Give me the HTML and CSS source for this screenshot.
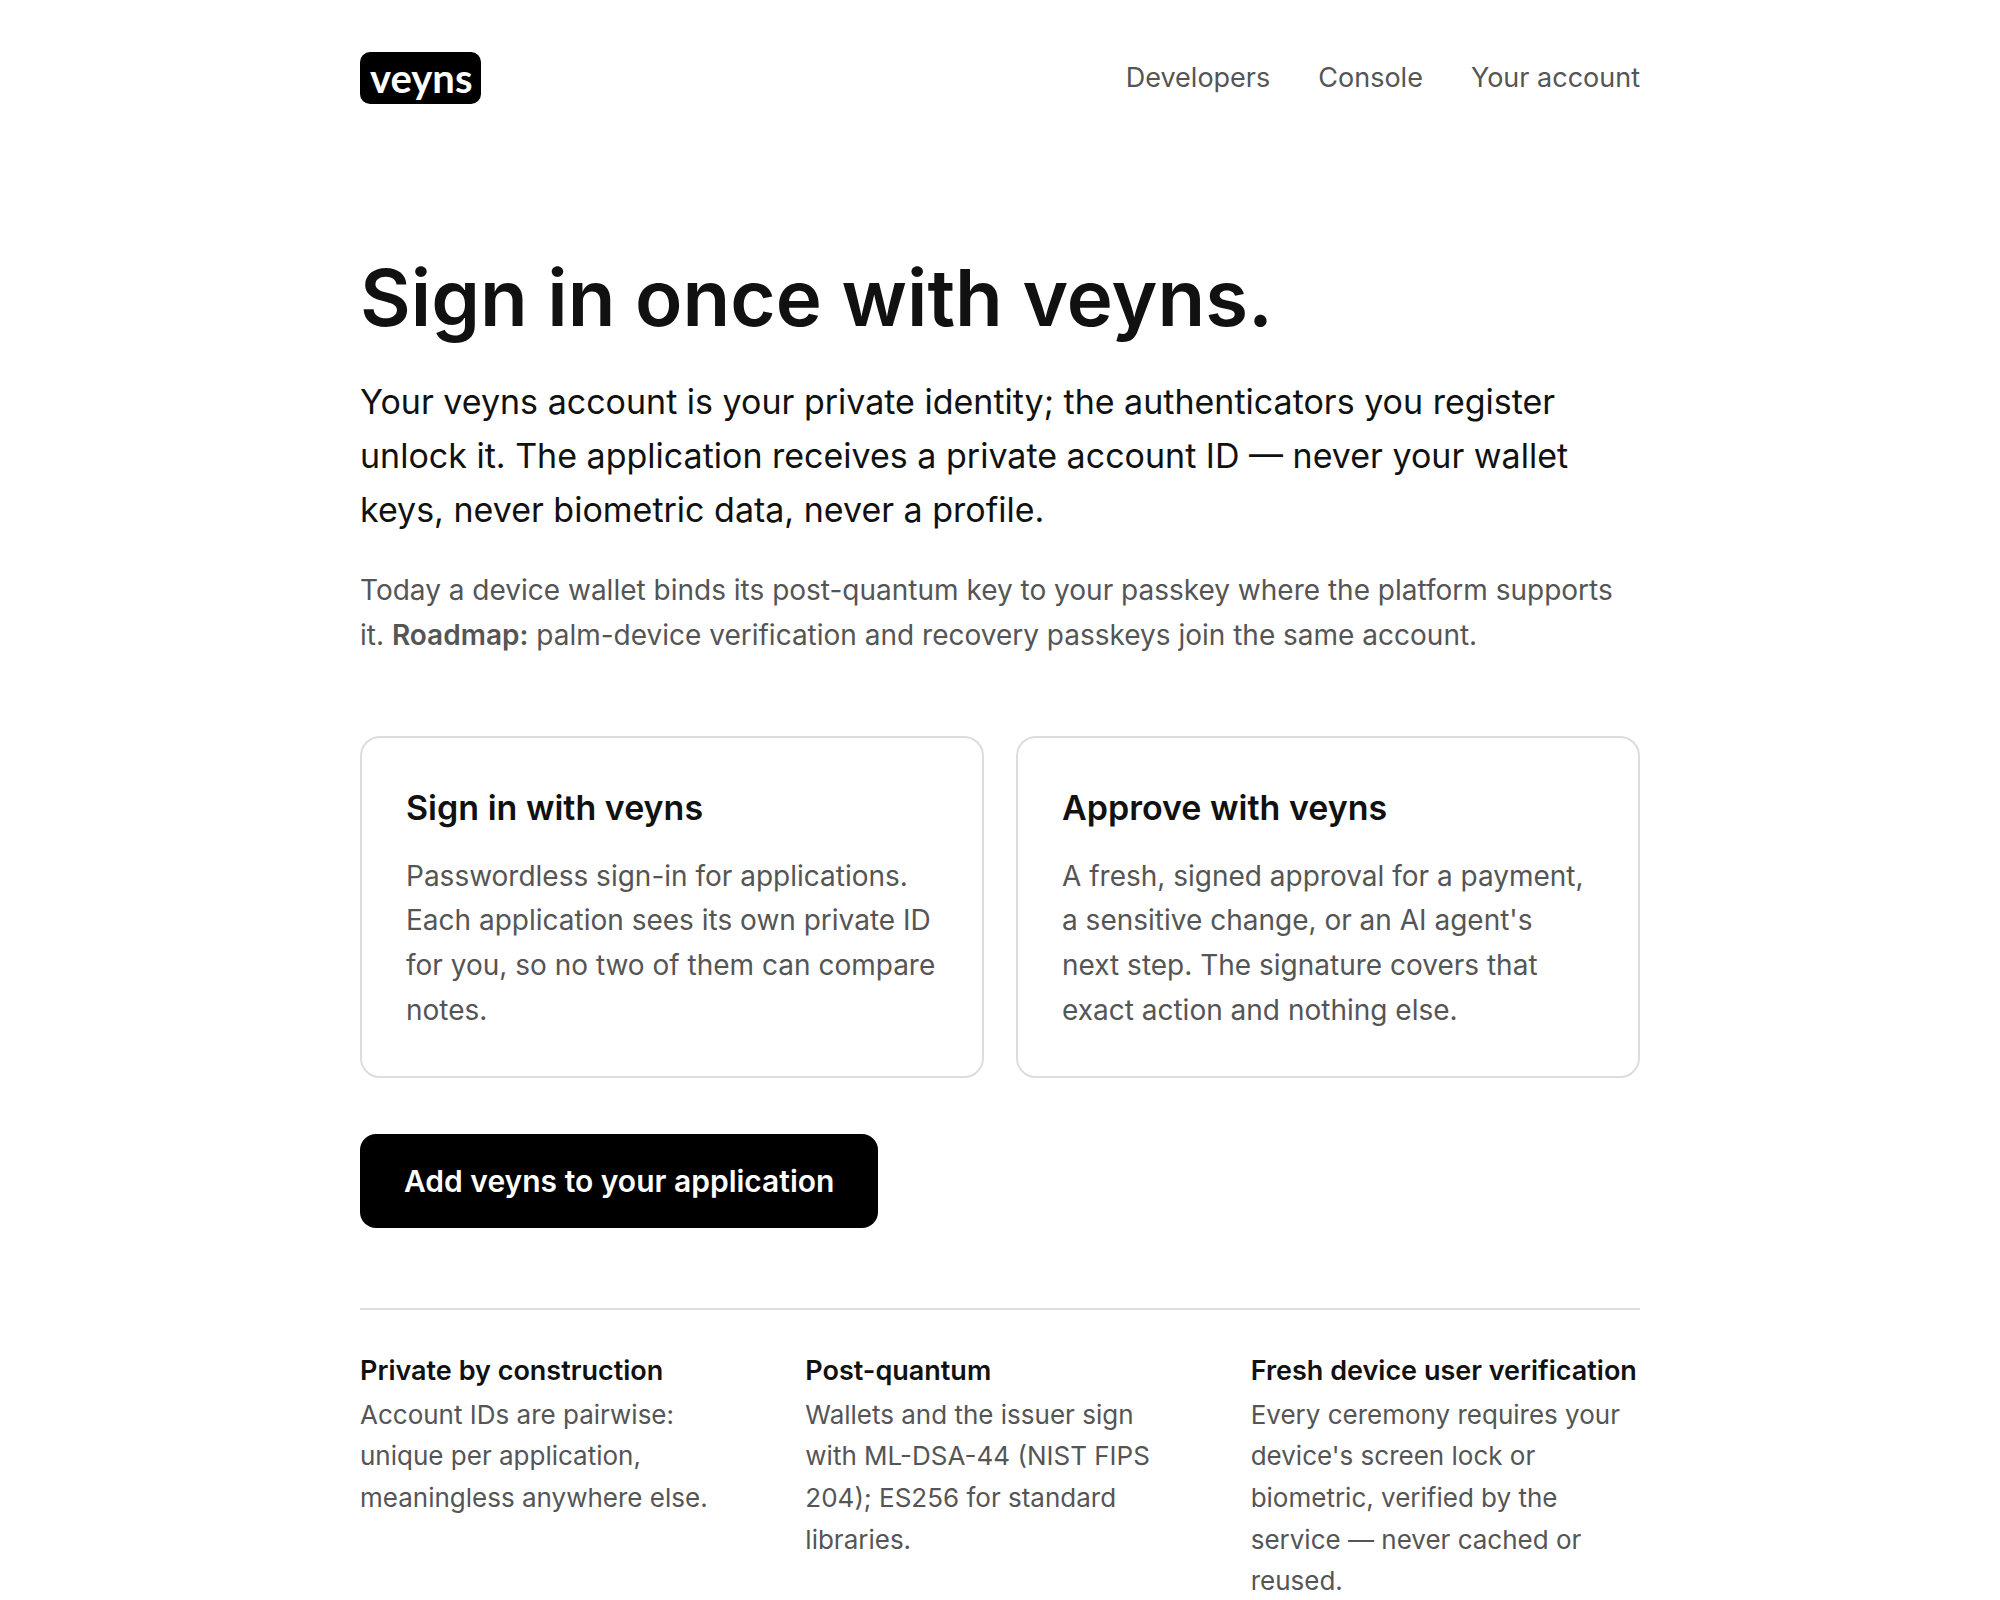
FILE: index.html
```html
<!DOCTYPE html>
<html lang="en">
<head>
    <meta charset="UTF-8">
    <meta name="viewport" content="width=device-width, initial-scale=1.0">
    <title>veyns</title>
    <link rel="stylesheet" href="styles.css">
</head>
<body>
    <div class="wrap">
        <header class="site-header">
            <a class="logo" href="#">veyns</a>
            <nav class="site-nav">
                <a href="#">Developers</a>
                <a href="#">Console</a>
                <a href="#">Your account</a>
            </nav>
        </header>

        <main>
            <h1>Sign in once with veyns.</h1>
            <p class="lead">Your veyns account is your private identity; the authenticators you register unlock it. The application receives a private account ID — never your wallet keys, never biometric data, never a profile.</p>
            <p class="note">Today a device wallet binds its post-quantum key to your passkey where the platform supports it. <strong>Roadmap:</strong> palm-device verification and recovery passkeys join the same account.</p>

            <div class="cards">
                <section class="card">
                    <h2>Sign in with veyns</h2>
                    <p>Passwordless sign-in for applications. Each application sees its own private ID for you, so no two of them can compare notes.</p>
                </section>
                <section class="card">
                    <h2>Approve with veyns</h2>
                    <p>A fresh, signed approval for a payment, a sensitive change, or an AI agent's next step. The signature covers that exact action and nothing else.</p>
                </section>
            </div>

            <a class="btn" href="#">Add veyns to your application</a>

            <div class="facts">
                <section>
                    <h3>Private by construction</h3>
                    <p>Account IDs are pairwise: unique per application, meaningless anywhere else.</p>
                </section>
                <section>
                    <h3>Post-quantum</h3>
                    <p>Wallets and the issuer sign with ML-DSA-44 (NIST FIPS 204); ES256 for standard libraries.</p>
                </section>
                <section>
                    <h3>Fresh device user verification</h3>
                    <p>Every ceremony requires your device's screen lock or biometric, verified by the service — never cached or reused.</p>
                </section>
            </div>
        </main>
    </div>
</body>
</html>
```
FILE: styles.css
```css
* { box-sizing: border-box; }
body {
    margin: 0;
    font-family: Inter, "Liberation Sans", sans-serif;
    font-size: 28px;
    line-height: 1.6;
    color: #111;
    background: #fff;
}
h1, h2, h3, p { margin: 0; }
a { text-decoration: none; }
.wrap {
    max-width: 1368px;
    margin: 0 auto;
    padding: 0 44px;
}
.site-header {
    display: flex;
    align-items: center;
    justify-content: space-between;
    padding: 52px 0 148px;
}
.logo {
    padding: 0 8px 0 10px;
    border-radius: 10px;
    background: #000;
    color: #fff;
    font-family: Lato, sans-serif;
    font-size: 40px;
    font-weight: 700;
    line-height: 52px;
}
.site-nav {
    display: flex;
    gap: 48px;
    font-size: 27px;
    line-height: 44px;
}
.site-nav a { color: #555; }
h1 {
    font-size: 78px;
    font-weight: 600;
    line-height: 92px;
    margin-bottom: 31px;
}
.lead {
    font-size: 34px;
    line-height: 54px;
    margin-bottom: 31px;
}
.note { color: #555; }
.note strong { font-weight: 600; }
.cards {
    display: grid;
    grid-template-columns: 1fr 1fr;
    gap: 32px;
    margin: 78px 0 56px;
}
.card {
    padding: 44px 44px 43px;
    border: 2px solid #ddd;
    border-radius: 20px;
}
.card h2 {
    font-size: 34px;
    font-weight: 600;
    line-height: 52px;
    margin-bottom: 20px;
}
.card p { color: #555; }
.btn {
    display: inline-block;
    padding: 24px 44px;
    border-radius: 16px;
    background: #000;
    color: #fff;
    font-size: 30px;
    font-weight: 600;
    line-height: 46px;
}
.facts {
    display: grid;
    grid-template-columns: repeat(3, 1fr);
    gap: 56px;
    margin-top: 80px;
    padding-top: 40px;
    border-top: 2px solid #ddd;
}
.facts h3 {
    font-size: 27px;
    font-weight: 600;
    line-height: 42px;
}
.facts p {
    padding: 2px 6px 0 0;
    color: #555;
    font-size: 26px;
}
```
